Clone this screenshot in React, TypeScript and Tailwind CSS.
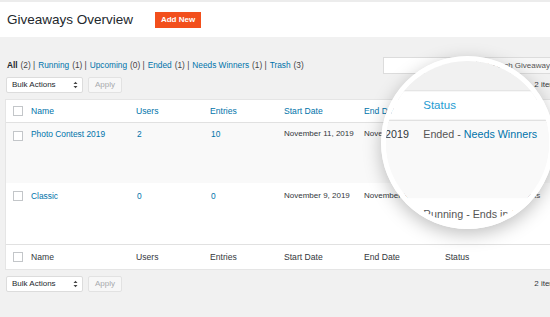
import React from 'react';

const font = { fontFamily: '"Liberation Sans", Arial, sans-serif' };

function Checkbox({ className = '' }: { className?: string }) {
  return <span className={`block h-[10px] w-[10px] shrink-0 border border-[#c3c6c9] bg-white ${className}`} />;
}

function BulkBar() {
  return (
    <div className="flex h-[16px] items-center gap-[5px] pl-[6px]">
      <div className="flex h-[16px] w-[77px] items-center justify-between rounded-[2px] border border-[#dcdcdc] bg-white pl-[5px] pr-[4px] text-[8px] text-[#23282d]">
        <span>Bulk Actions</span>
        <svg width="5" height="8" viewBox="0 0 5 8">
          <path d="M0.5 3 L2.5 0.8 L4.5 3 Z M0.5 5 L2.5 7.2 L4.5 5 Z" fill="#444" />
        </svg>
      </div>
      <div className="flex h-[16px] w-[34px] items-center justify-center rounded-[2px] border border-[#e2e2e2] bg-[#f7f7f7] text-[8px] text-[#a7aaad]">
        Apply
      </div>
      <span className="ml-auto mr-[-10px] text-[8px] text-[#32373c]">2 items</span>
    </div>
  );
}

const cols = 'grid grid-cols-[25px_105px_74px_74px_80px_81px_1fr]';

type Row = {
  name: string;
  users: string;
  entries: string;
  start: string;
  end: string;
  status: React.ReactNode;
};

const rows: (Row & { tall: string; bg: string; pad: string; box: string })[] = [
  {
    name: 'Photo Contest 2019',
    users: '2',
    entries: '10',
    start: 'November 11, 2019',
    end: 'November 18, 2019',
    status: (
      <>
        Ended - <span className="text-[#0073aa]">Needs Winners</span>
      </>
    ),
    tall: 'h-[60px]',
    bg: 'bg-[#f9f9f9]',
    pad: 'pt-[5px]',
    box: 'mt-[3px]',
  },
  {
    name: 'Classic',
    users: '0',
    entries: '0',
    start: 'November 9, 2019',
    end: 'November 30, 2019',
    status: 'Running - Ends in 3 weeks',
    tall: 'h-[61px]',
    bg: 'bg-white',
    pad: 'pt-[7px]',
    box: 'mt-[1px]',
  },
];

function Screen() {
  return (
    <div className="flex h-[317px] w-[550px] flex-col overflow-hidden bg-[#f1f1f1]" style={font}>
      <header className="flex h-[37px] shrink-0 items-center border-t-2 border-[#ececec] bg-white pl-[7px]">
        <h1 className="text-[13.5px] leading-none text-[#23282d]">Giveaways Overview</h1>
        <span className="ml-[22px] flex h-[16px] w-[46px] items-center justify-center bg-[#f24f1c] text-[8px] font-bold text-white">
          Add New
        </span>
      </header>

      <div className="mt-[20px] flex h-[17px] items-center pl-[7px]">
        <div className="flex items-center gap-[3px] text-[8.3px] text-[#444]">
          <span className="font-bold text-[#23282d]">All</span>
          <span>(2) |</span>
          <span className="text-[#0073aa]">Running</span>
          <span>(1) |</span>
          <span className="text-[#0073aa]">Upcoming</span>
          <span>(0) |</span>
          <span className="text-[#0073aa]">Ended</span>
          <span>(1) |</span>
          <span className="text-[#0073aa]">Needs Winners</span>
          <span>(1) |</span>
          <span className="text-[#0073aa]">Trash</span>
          <span>(3)</span>
        </div>
        <div className="ml-auto mr-[-11px] flex items-center gap-[3px]">
          <div className="h-[17px] w-[94px] border border-[#dcdcdc] bg-white" />
          <div className="flex h-[17px] items-center rounded-[2px] border border-[#dcdcdc] bg-[#f7f7f7] px-[6px] text-[8px] text-[#555]">
            Search Giveaways
          </div>
        </div>
      </div>

      <div className="mt-[3px]">
        <BulkBar />
      </div>

      <div className="mt-[6px] ml-[5px] mr-[-20px] border border-[#e5e5e5] bg-white">
        <div className={`${cols} h-[23px] items-center border-b border-[#e1e1e1] text-[8.6px] text-[#0073aa]`}>
          <Checkbox className="ml-[7px]" />
          <span>Name</span>
          <span>Users</span>
          <span>Entries</span>
          <span>Start Date</span>
          <span>End Date</span>
          <span className="text-[#1e9bd2]">Status</span>
        </div>
        {rows.map((r) => (
          <div key={r.name} className={`${cols} ${r.tall} ${r.bg} ${r.pad} items-start text-[8px] leading-[12px] text-[#32373c]`}>
            <Checkbox className={`ml-[7px] ${r.box}`} />
            <span className="text-[8.4px] text-[#0073aa]">{r.name}</span>
            <span className="pl-[1px] text-[8.4px] text-[#0073aa]">{r.users}</span>
            <span className="pl-[1px] text-[8.4px] text-[#0073aa]">{r.entries}</span>
            <span>{r.start}</span>
            <span>{r.end}</span>
            <span className="text-[#555]">{r.status}</span>
          </div>
        ))}
        <div className={`${cols} h-[25px] items-center border-t border-[#e1e1e1] text-[8.6px] text-[#32373c]`}>
          <Checkbox className="ml-[7px]" />
          <span>Name</span>
          <span>Users</span>
          <span>Entries</span>
          <span>Start Date</span>
          <span>End Date</span>
          <span>Status</span>
        </div>
      </div>

      <div className="mt-[6px]">
        <BulkBar />
      </div>
    </div>
  );
}

export default function App() {
  return (
    <div className="relative h-[317px] w-[550px] overflow-hidden">
      <Screen />
      {/* magnifier lens */}
      <div className="absolute left-[381px] top-[56px] h-[173px] w-[173px] overflow-hidden rounded-full border-[5px] border-white shadow-[0_5px_18px_rgba(0,0,0,0.25)]">
        <div className="absolute left-[-386px] top-[-61px] origin-[509px_130px] scale-x-[1.34] scale-y-[1.29]">
          <Screen />
        </div>
      </div>
    </div>
  );
}
